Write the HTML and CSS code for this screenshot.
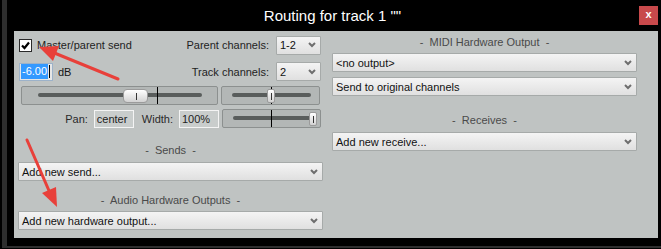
FILE: index.html
```html
<!DOCTYPE html>
<html lang="en">
<head>
  <meta charset="UTF-8" />
  <title>Routing for track 1</title>
  <link rel="stylesheet" href="styles.css">
</head>
<body>

  <div class="screen">
    <div class="edge"></div>

    <div class="window">
      <!-- title bar -->
      <div class="titlebar">
        <div class="title">Routing for track 1 &quot;&quot;</div>
        <div class="close">x</div>
      </div>

      <div class="panel">
        <!-- left column: track send, sends, audio outputs -->
        <div class="col">
          <div class="row row1">
            <div class="check-wrap">
              <span class="checkbox">
                <svg width="11" height="11" viewBox="0 0 11 11"><polyline points="2,5.5 4.5,8 9,2.5" fill="none" stroke="#000" stroke-width="2.2"/></svg>
              </span>
              <span class="check-text">Master/parent send</span>
            </div>
            <span class="field-label">Parent channels:</span>
            <div class="select small"><span>1-2</span><svg class="chev" width="8" height="6" viewBox="0 0 8 6"><polyline points="1,1 4,4 7,1" fill="none" stroke="#6e6e6e" stroke-width="2"/></svg></div>
          </div>

          <div class="row row2">
            <div class="db-wrap">
              <span class="db-box"><span class="sel">-6.00</span><span class="caret"></span></span>
              <span class="db-text">dB</span>
            </div>
            <span class="field-label">Track channels:</span>
            <div class="select small"><span>2</span><svg class="chev" width="8" height="6" viewBox="0 0 8 6"><polyline points="1,1 4,4 7,1" fill="none" stroke="#6e6e6e" stroke-width="2"/></svg></div>
          </div>

          <div class="row row3">
            <div class="slider vol">
              <div class="groove"></div>
              <div class="mark" style="left: 135px"></div>
              <div class="thumb wide-thumb" style="left: 101px"></div>
            </div>
            <div class="slider side">
              <div class="groove"></div>
              <div class="mark" style="left: 49px"></div>
              <div class="thumb" style="left: 45px"></div>
            </div>
          </div>

          <div class="row row4">
            <span class="small-label">Pan:</span>
            <span class="value-box">center</span>
            <span class="small-label gap">Width:</span>
            <span class="value-box">100%</span>
            <div class="slider side width-slider">
              <div class="groove"></div>
              <div class="mark" style="left: 48px"></div>
              <div class="thumb" style="left: 86px"></div>
            </div>
          </div>

          <div class="heading sends">-&nbsp; Sends &nbsp;-</div>
          <div class="select"><span>Add new send...</span><svg class="chev" width="8" height="6" viewBox="0 0 8 6"><polyline points="1,1 4,4 7,1" fill="none" stroke="#6e6e6e" stroke-width="2"/></svg></div>

          <div class="heading hw">-&nbsp; Audio Hardware Outputs &nbsp;-</div>
          <div class="select"><span>Add new hardware output...</span><svg class="chev" width="8" height="6" viewBox="0 0 8 6"><polyline points="1,1 4,4 7,1" fill="none" stroke="#6e6e6e" stroke-width="2"/></svg></div>
        </div>

        <!-- right column: midi output, receives -->
        <div class="col">
          <div class="heading midi">-&nbsp; MIDI Hardware Output &nbsp;-</div>
          <div class="select"><span>&lt;no output&gt;</span><svg class="chev" width="8" height="6" viewBox="0 0 8 6"><polyline points="1,1 4,4 7,1" fill="none" stroke="#6e6e6e" stroke-width="2"/></svg></div>
          <div class="select next"><span>Send to original channels</span><svg class="chev" width="8" height="6" viewBox="0 0 8 6"><polyline points="1,1 4,4 7,1" fill="none" stroke="#6e6e6e" stroke-width="2"/></svg></div>

          <div class="heading receives">-&nbsp; Receives &nbsp;-</div>
          <div class="select"><span>Add new receive...</span><svg class="chev" width="8" height="6" viewBox="0 0 8 6"><polyline points="1,1 4,4 7,1" fill="none" stroke="#6e6e6e" stroke-width="2"/></svg></div>
        </div>
      </div>
    </div>
  </div>

  <div class="bottom-line"></div>

  <!-- red annotation arrows drawn over the window -->
  <svg class="arrows" width="661" height="249" viewBox="0 0 661 249">
    <line x1="118" y1="79" x2="52" y2="52" stroke="#e8403a" stroke-width="3" stroke-linecap="round"/>
    <polygon points="39,47 59,46 53,61" fill="#e8403a"/>
    <line x1="27" y1="140" x2="50" y2="193" stroke="#e8403a" stroke-width="3" stroke-linecap="round"/>
    <polygon points="57,207 42,193 56,187" fill="#e8403a"/>
  </svg>

</body>
</html>
```

FILE: styles.css
```css
* {
  box-sizing: border-box;
}

body {
  margin: 0;
  width: 661px;
  height: 249px;
  background-color: #000;
  font-family: "Liberation Sans", Arial, sans-serif;
  font-size: 11px;
  color: #151515;
  position: relative;
  overflow: hidden;
}

.screen {
  display: flex;
  height: 246px;
}

.edge {
  width: 5px;
  margin-left: 2px;
  background-color: #2e2e2e;
}

.window {
  width: 644px;
  margin-left: 7px;
  display: flex;
  flex-direction: column;
}

.bottom-line {
  height: 2px;
  margin-left: 2px;
  background-color: #2e2e2e;
}

/* title bar */

.titlebar {
  height: 31px;
  display: flex;
  align-items: flex-start;
}

.title {
  flex: 1;
  text-align: center;
  color: #fff;
  font-size: 15px;
  padding-top: 7px;
  padding-left: 12px;
}

.close {
  width: 19px;
  height: 19px;
  margin-top: 6px;
  background-color: #c8494b;
  color: #fff;
  font-weight: bold;
  font-size: 11px;
  text-align: center;
  line-height: 17px;
}

/* main panel */

.panel {
  height: 207px;
  background-color: #bfc3c2;
  padding: 4px 21px 0 4px;
  display: grid;
  grid-template-columns: 305px 305px;
  column-gap: 9px;
}

.col {
  display: flex;
  flex-direction: column;
}

.row {
  display: flex;
  align-items: center;
}

.row1 {
  height: 20px;
}

.row2 {
  height: 19px;
  margin-top: 7px;
}

.row3 {
  height: 19px;
  margin-top: 5px;
}

.row4 {
  height: 19px;
  margin-top: 4px;
  justify-content: flex-end;
}

.check-wrap, .db-wrap {
  flex: 1;
  display: flex;
  align-items: center;
}

.checkbox {
  width: 13px;
  height: 13px;
  margin-left: 1px;
  background-color: #fff;
  border: 1px solid #2a2a2a;
  display: flex;
  align-items: center;
  justify-content: center;
}

.check-text {
  margin-left: 5px;
  color: #1e1e1e;
}

.field-label {
  margin-right: 7px;
  color: #1e1e1e;
}

.db-box {
  width: 34px;
  height: 18px;
  margin-left: 1px;
  background-color: #e6e6e6;
  border: 1px solid #9cb2c9;
  display: flex;
  align-items: center;
  padding-left: 1px;
}

.sel {
  background-color: #3399ff;
  color: #fff;
  padding: 1px 1px;
  line-height: 13px;
}

.caret {
  width: 1px;
  height: 13px;
  background-color: #000;
  margin-left: 1px;
}

.db-text {
  margin-left: 5px;
}

/* dropdowns */

.select {
  height: 19px;
  display: flex;
  align-items: center;
  justify-content: space-between;
  padding: 0 4px 0 3px;
  background: linear-gradient(#f4f4f4, #e0e0e0);
  border: 1px solid #a6aaa9;
  border-radius: 1px;
  color: #111;
}

.select.small {
  width: 45px;
  margin-right: 2px;
}

.select.next {
  margin-top: 5px;
}

/* sliders */

.slider {
  position: relative;
  height: 19px;
  background-color: #b3b7b6;
  border: 1px solid #8c908f;
  border-radius: 2px;
}

.slider.vol {
  width: 197px;
  margin-left: 3px;
}

.slider.side {
  width: 99px;
  margin-left: 3px;
}

.width-slider {
  margin-right: 2px;
}

.groove {
  height: 4px;
  margin: 6px 8px 0 10px;
  background-color: #595d5c;
  border-radius: 2px;
}

.vol .groove {
  margin: 6px 15px 0 16px;
}

.mark {
  position: absolute;
  top: 0;
  bottom: 0;
  width: 1px;
  background-color: #000;
}

.thumb {
  position: absolute;
  top: 2px;
  width: 8px;
  height: 14px;
  background: linear-gradient(#ffffff, #d2d2d2);
  border: 1px solid #9b9b9b;
  border-radius: 2px;
}

.thumb::after {
  content: "";
  position: absolute;
  left: 50%;
  top: 3px;
  width: 1px;
  height: 7px;
  background-color: #333;
}

.wide-thumb {
  width: 25px;
  border-radius: 4px;
}

/* pan / width */

.small-label {
  margin-right: 6px;
  color: #2a2a2a;
}

.small-label.gap {
  margin-left: 8px;
}

.value-box {
  width: 40px;
  height: 18px;
  background-color: #c9cdcc;
  border: 1px solid #f4f4f4;
  padding-left: 2px;
  line-height: 16px;
  color: #222;
}

/* section headings */

.heading {
  text-align: center;
  color: #4a4a4a;
  line-height: 14px;
}

.heading.sends {
  margin-top: 15px;
  margin-bottom: 5px;
}

.heading.hw {
  margin-top: 12px;
  margin-bottom: 4px;
}

.heading.midi {
  margin-bottom: 4px;
}

.heading.receives {
  margin-top: 17px;
  margin-bottom: 5px;
}

.arrows {
  position: absolute;
  left: 0;
  top: 0;
  pointer-events: none;
}
```
